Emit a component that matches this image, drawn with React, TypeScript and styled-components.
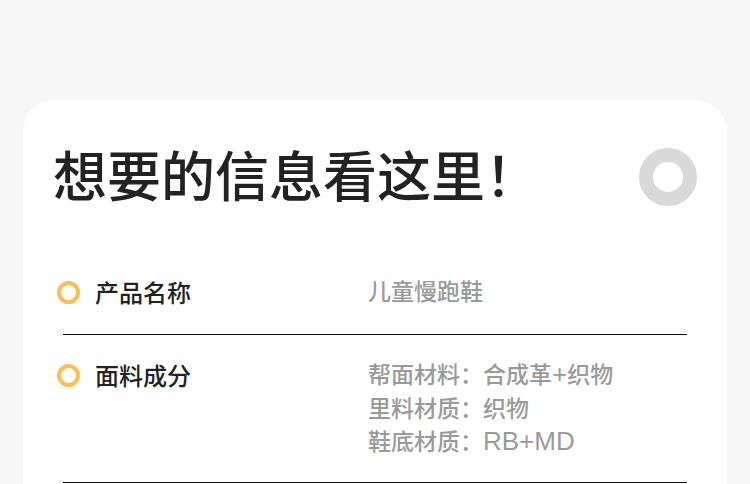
import React from 'react';
import styled, { createGlobalStyle } from 'styled-components';

const GlobalStyle = createGlobalStyle`
    html, body {
        margin: 0;
        padding: 0;
        background: #f7f7f7;
        font-family: "Noto Sans CJK SC", "Noto Sans", sans-serif;
    }
`;

const Page = styled.div`
    width: 750px;
    height: 484px;
    overflow: hidden;
    padding-top: 100px;
    box-sizing: border-box;
`;

const Card = styled.div`
    margin-left: 23px;
    width: 704px;
    min-height: 420px;
    background: #fff;
    border-radius: 32px 32px 0 0;
    padding: 40px 30px 0 30px;
    box-sizing: border-box;
`;

const Header = styled.div`
    display: flex;
    align-items: center;
    justify-content: space-between;
`;

const Title = styled.h1`
    margin: 0;
    font-size: 54px;
    line-height: 65px;
    font-weight: 500;
    color: #222;
`;

const Badge = styled.div`
    width: 30px;
    height: 30px;
    border: 14px solid #d9d9d9;
    border-radius: 50%;
    margin-top: 8px;
`;

const List = styled.div`
    margin: 46px 10px 0 10px;
`;

const Row = styled.div`
    display: flex;
    align-items: flex-start;
    padding: 22px 0 24px;
    border-bottom: 1px solid #111;
`;

const Dot = styled.div`
    flex: none;
    width: 15px;
    height: 15px;
    border: 4px solid #fcbf55;
    border-radius: 50%;
    margin: 6.5px 15px 0 -6px;
`;

const Label = styled.div`
    flex: none;
    width: 273px;
    font-size: 24px;
    line-height: 36px;
    font-weight: 500;
    color: #222;
`;

const Values = styled.div`
    display: flex;
    flex-direction: column;
`;

const Value = styled.div`
    font-size: 23px;
    line-height: 33.5px;
    font-weight: 500;
    color: #9a9a9a;
`;

const Latin = styled.span`
    font-family: "Liberation Sans", Arial, sans-serif;
    font-size: 26px;
    font-weight: 400;
    line-height: 1;
`;

type Item = {
    label: string;
    values: string[];
};

const items: Item[] = [
    { label: '产品名称', values: ['儿童慢跑鞋'] },
    { label: '面料成分', values: ['帮面材料：合成革+织物', '里料材质：织物', '鞋底材质：RB+MD'] },
];

// latin runs are set in a wider face, like the original
const renderValue = (text: string) =>
    text.split(/([A-Za-z0-9+]+)/).map((part, i) =>
        /[A-Za-z0-9+]/.test(part) ? <Latin key={i}>{part}</Latin> : part
    );

const App = () => {
    return (
        <Page>
            <GlobalStyle />
            <Card>
                <Header>
                    <Title>想要的信息看这里！</Title>
                    <Badge />
                </Header>
                <List>
                    {items.map(item => (
                        <Row key={item.label}>
                            <Dot />
                            <Label>{item.label}</Label>
                            <Values>
                                {item.values.map(v => <Value key={v}>{renderValue(v)}</Value>)}
                            </Values>
                        </Row>
                    ))}
                </List>
            </Card>
        </Page>
    );
}

export default App;
